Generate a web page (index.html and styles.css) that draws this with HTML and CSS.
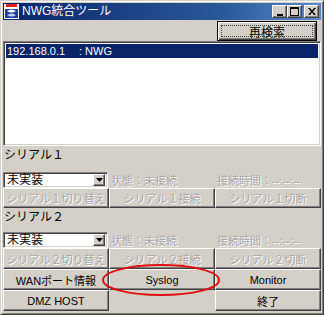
FILE: index.html
```html
<!DOCTYPE html>
<html>
<head>
<meta charset="utf-8">
<link rel="stylesheet" href="styles.css">
</head>
<body>
<div class="window">
  <div class="titlebar">
    <svg class="appicon" width="15" height="15" viewBox="0 0 15 15">
      <rect x="0" y="0" width="15" height="15" fill="#ffffff"/>
      <rect x="2" y="0" width="11" height="3" fill="#e02020"/>
      <path d="M1 5 H14 V14 H1 Z" fill="#2040a0"/>
      <path d="M3 7 Q7.5 4 12 7 Q7.5 10 3 7 Z" fill="#ffffff"/>
      <path d="M3 11 Q7.5 8 12 11 Q7.5 14 3 11 Z" fill="#c0d0ff"/>
    </svg>
    <span class="title">NWG統合ツール</span>
    <div class="caption">
      <div class="cbtn"><svg width="8" height="8" viewBox="0 0 8 8"><rect x="1" y="6" width="6" height="2" fill="#000"/></svg></div>
      <div class="cbtn"><svg width="9" height="9" viewBox="0 0 9 9"><rect x="0.5" y="0.5" width="8" height="8" fill="none" stroke="#000"/><rect x="0" y="0" width="9" height="2" fill="#000"/></svg></div>
      <div class="cbtn close"><svg width="8" height="7" viewBox="0 0 8 7"><path d="M0 0 H2 L4 2.5 L6 0 H8 L5 3.5 L8 7 H6 L4 4.5 L2 7 H0 L3 3.5 Z" fill="#000"/></svg></div>
    </div>
  </div>

  <div class="toolbar">
    <button class="btn default"><span class="focus">再検索</span></button>
  </div>

  <div class="list">
    <div class="row selected"><span class="ip">192.168.0.1</span><span>: NWG</span></div>
  </div>

  <div class="label label-first">シリアル１</div>
  <div class="ctrlrow">
    <div class="combo"><span class="combo-text">未実装</span><div class="arrow"><svg width="7" height="4" viewBox="0 0 7 4"><path d="M0 0 H7 L3.5 4 Z" fill="#000"/></svg></div></div>
    <span class="status">状態：未接続</span>
    <span class="time">接続時間：--:--:--</span>
  </div>
  <div class="btnrow row20">
    <button class="btn" disabled>シリアル１切り替え</button>
    <button class="btn" disabled>シリアル１接続</button>
    <button class="btn" disabled>シリアル１切断</button>
  </div>

  <div class="label label-second">シリアル２</div>
  <div class="ctrlrow">
    <div class="combo"><span class="combo-text">未実装</span><div class="arrow"><svg width="7" height="4" viewBox="0 0 7 4"><path d="M0 0 H7 L3.5 4 Z" fill="#000"/></svg></div></div>
    <span class="status">状態：未接続</span>
    <span class="time">接続時間：--:--:--</span>
  </div>
  <div class="btnrow row21">
    <button class="btn" disabled>シリアル２切り替え</button>
    <button class="btn" disabled>シリアル２接続</button>
    <button class="btn" disabled>シリアル２切断</button>
  </div>
  <div class="btnrow row21">
    <button class="btn">WANポート情報</button>
    <button class="btn">Syslog</button>
    <button class="btn">Monitor</button>
  </div>
  <div class="btnrow row21">
    <button class="btn">DMZ HOST</button>
    <div class="empty"></div>
    <button class="btn">終了</button>
  </div>

  <svg class="annotation" width="124" height="36" viewBox="0 0 124 36">
    <ellipse cx="61" cy="17" rx="58" ry="15" fill="none" stroke="#e01010" stroke-width="2"/>
  </svg>
</div>
</body>
</html>
```

FILE: styles.css
```css
* { box-sizing: border-box; }

html, body {
  margin: 0;
  padding: 0;
  background: #ffffff;
}

body {
  font-family: "Liberation Sans", "Noto Sans CJK JP", sans-serif;
  font-size: 11px;
  color: #000;
}

.window {
  position: relative;
  width: 324px;
  height: 315px;
  background: #d4d0c8;
  padding: 2px 2px 3px 2px;
  border: 1px solid;
  border-color: #d4d0c8 #404040 #404040 #d4d0c8;
  box-shadow: inset 1px 1px #ffffff, inset -1px -1px #808080;
  display: flex;
  flex-direction: column;
}

.titlebar {
  height: 17px;
  background: linear-gradient(to right, #0a246a, #2a5a9a 70%, #5a8ac8);
  display: flex;
  align-items: center;
  padding-left: 1px;
  color: #ffffff;
}

.appicon { flex: none; }

.title {
  margin-left: 3px;
  font-size: 12px;
  line-height: 17px;
  flex: 1;
}

.caption {
  display: flex;
  align-items: center;
  padding-right: 2px;
}

.cbtn {
  width: 15px;
  height: 13px;
  background: #d4d0c8;
  border: 1px solid;
  border-color: #ffffff #404040 #404040 #ffffff;
  box-shadow: inset -1px -1px #808080;
  display: flex;
  align-items: center;
  justify-content: center;
}

.cbtn.close { margin-left: 2px; }

.toolbar {
  height: 21px;
  display: flex;
  justify-content: flex-end;
  padding-top: 1px;
  padding-right: 4px;
}

.btn {
  font-family: "Liberation Sans", "Noto Sans CJK JP", sans-serif;
  font-size: 11px;
  color: #000;
  background: #d4d0c8;
  border: 1px solid;
  border-color: #ffffff #404040 #404040 #ffffff;
  box-shadow: inset -1px -1px #808080;
  margin: 0;
  padding: 0;
  display: flex;
  align-items: center;
  justify-content: center;
  white-space: nowrap;
  overflow: hidden;
}

.btn:disabled {
  color: #a8a8a8;
  text-shadow: 1px 1px 0 #ffffff;
}

.btn.default {
  width: 100px;
  height: 20px;
  border: 1px solid #000;
  box-shadow: inset 1px 1px #ffffff, inset -1px -1px #404040, inset -2px -2px #808080;
  padding: 3px;
}

.focus {
  flex: 1;
  align-self: stretch;
  border: 1px dotted #404040;
  display: flex;
  align-items: center;
  justify-content: center;
  font-size: 12px;
}

.list {
  height: 105px;
  background: #ffffff;
  border: 1px solid;
  border-color: #808080 #ffffff #ffffff #808080;
  box-shadow: inset 1px 1px #404040, inset -1px -1px #d4d0c8;
  padding: 2px;
}

.row {
  height: 14px;
  line-height: 14px;
  white-space: pre;
  padding-left: 1px;
}

.row.selected {
  background: #0a246a;
  color: #ffffff;
}

.ip {
  display: inline-block;
  width: 72px;
}

.label {
  padding-left: 1px;
  line-height: 14px;
  font-size: 12px;
}

.label-first { height: 25px; padding-top: 2px; }
.label-second { height: 23px; padding-top: 2px; }

.ctrlrow {
  height: 17px;
  display: flex;
  align-items: center;
}

.combo {
  width: 105px;
  height: 16px;
  margin-top: 1px;
  background: #ffffff;
  border: 1px solid;
  border-color: #808080 #ffffff #ffffff #808080;
  box-shadow: inset 1px 1px #404040, inset -1px -1px #d4d0c8;
  display: flex;
  align-items: center;
  padding: 2px 2px 2px 3px;
}

.combo-text {
  flex: 1;
  font-size: 12px;
  line-height: 12px;
}

.arrow {
  width: 12px;
  height: 12px;
  background: #d4d0c8;
  border: 1px solid;
  border-color: #ffffff #404040 #404040 #ffffff;
  box-shadow: inset -1px -1px #808080;
  display: flex;
  align-items: center;
  justify-content: center;
}

.status, .time {
  color: #a8a8a8;
  text-shadow: 1px 1px 0 #ffffff;
  font-size: 11px;
}

.status {
  margin-left: 3px;
  width: 106px;
}

.btnrow {
  display: grid;
  grid-template-columns: 106px 106px 106px;
}

.row20 { height: 20px; }
.row21 { height: 21px; }

.empty { background: #d4d0c8; }

.annotation {
  position: absolute;
  left: 99px;
  top: 262px;
}
```
